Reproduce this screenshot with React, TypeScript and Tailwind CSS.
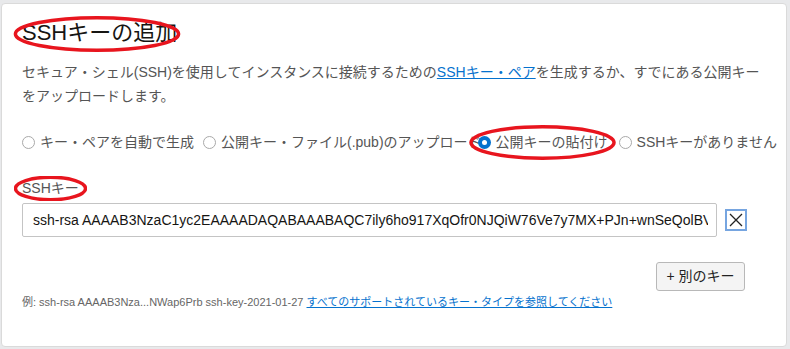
import React from 'react'

const font = { fontFamily: '"Liberation Sans", "Noto Sans CJK JP", sans-serif' }

interface RadioProps {
  label: string
  checked?: boolean
  className?: string
}

const Radio = ({ label, checked, className }: RadioProps) => (
  <label className={`flex items-center shrink-0 whitespace-nowrap ${className ?? ''}`}>
    {checked ? (
      <span className="w-[13px] h-[13px] rounded-full bg-[#0572ce] flex items-center justify-center">
        <span className="w-[5px] h-[5px] rounded-full bg-white" />
      </span>
    ) : (
      <span className="w-[13px] h-[13px] rounded-full border border-[#a9a9a9] bg-white" />
    )}
    <span className="ml-[5px] text-[14px] text-[#555555]">{label}</span>
  </label>
)

// red annotation ellipse drawn over the content
const Ring = ({ className }: { className: string }) => (
  <svg className={`absolute pointer-events-none ${className}`} viewBox="0 0 100 40" preserveAspectRatio="none">
    <ellipse cx="50" cy="20" rx="48" ry="18" fill="none" stroke="#e8151e" strokeWidth="3.5" vectorEffect="non-scaling-stroke" />
  </svg>
)

export default function App() {
  const sshKey =
    'ssh-rsa AAAAB3NzaC1yc2EAAAADAQABAAABAQC7ily6ho917XqOfr0NJQiW76Ve7y7MX+PJn+wnSeQolBVS8kQ2ZyH0qYxT'

  return (
    <div className="w-[790px] h-[349px] bg-[#e8e9eb] pt-[3px] pl-[1px] pr-[3px] pb-[2px]" style={font}>
      <div className="relative h-full bg-white border border-[#dadada] rounded-[4px] px-[20px] pt-[15px] overflow-hidden">
        <h2 className="text-[22px] leading-[28px] text-[#161513] font-normal">SSHキーの追加</h2>

        <p className="mt-[13px] text-[14px] leading-[24px] text-[#555555]">
          セキュア・シェル(SSH)を使用してインスタンスに接続するための
          <a className="text-[#0572ce] underline">SSHキー・ペア</a>
          を生成するか、すでにある公開キーをアップロードします。
        </p>

        <div className="mt-[24px] h-[20px] flex items-center">
          <Radio label="キー・ペアを自動で生成" className="mr-[9px]" />
          <Radio label="公開キー・ファイル(.pub)のアップロード" className="mr-[-4px]" />
          <Radio label="公開キーの貼付け" checked className="mr-[11px]" />
          <Radio label="SSHキーがありません" />
        </div>

        <div className="mt-[26px] text-[14px] leading-[20px] text-[#555555]">SSHキー</div>

        <div className="mt-[5px] flex items-center pr-[19px]">
          <input
            readOnly
            value={sshKey}
            className="flex-1 h-[34px] border border-[#c4c4c4] rounded-[2px] pl-[10px] pr-[8px] text-[14px] text-[#161513] outline-none"
            style={font}
          />
          <button className="ml-[8px] w-[22px] h-[22px] border-2 border-[#76a5e0] flex items-center justify-center">
            <svg width="16" height="16" viewBox="0 0 16 16">
              <path d="M2 2 L14 14 M14 2 L2 14" stroke="#222" strokeWidth="1.3" />
            </svg>
          </button>
        </div>

        <div className="mt-[25px] flex justify-end pr-[21px]">
          <button className="h-[29px] w-[89px] bg-[#f4f4f4] border border-[#b8b8b8] rounded-[3px] text-[14px] text-[#222]" style={font}>
            + 別のキー
          </button>
        </div>

        <div className="mt-[3px] text-[11px] leading-[16px] text-[#666666]">
          例: ssh-rsa AAAAB3Nza...NWap6Prb ssh-key-2021-01-27{' '}
          <a className="text-[#0572ce] underline">すべてのサポートされているキー・タイプを参照してください</a>
        </div>

        <Ring className="left-[10px] top-[12px] w-[170px] h-[36px]" />
        <Ring className="left-[466px] top-[121px] w-[149px] h-[35px]" />
        <Ring className="left-[12px] top-[172px] w-[73px] h-[25px]" />
      </div>
    </div>
  )
}
